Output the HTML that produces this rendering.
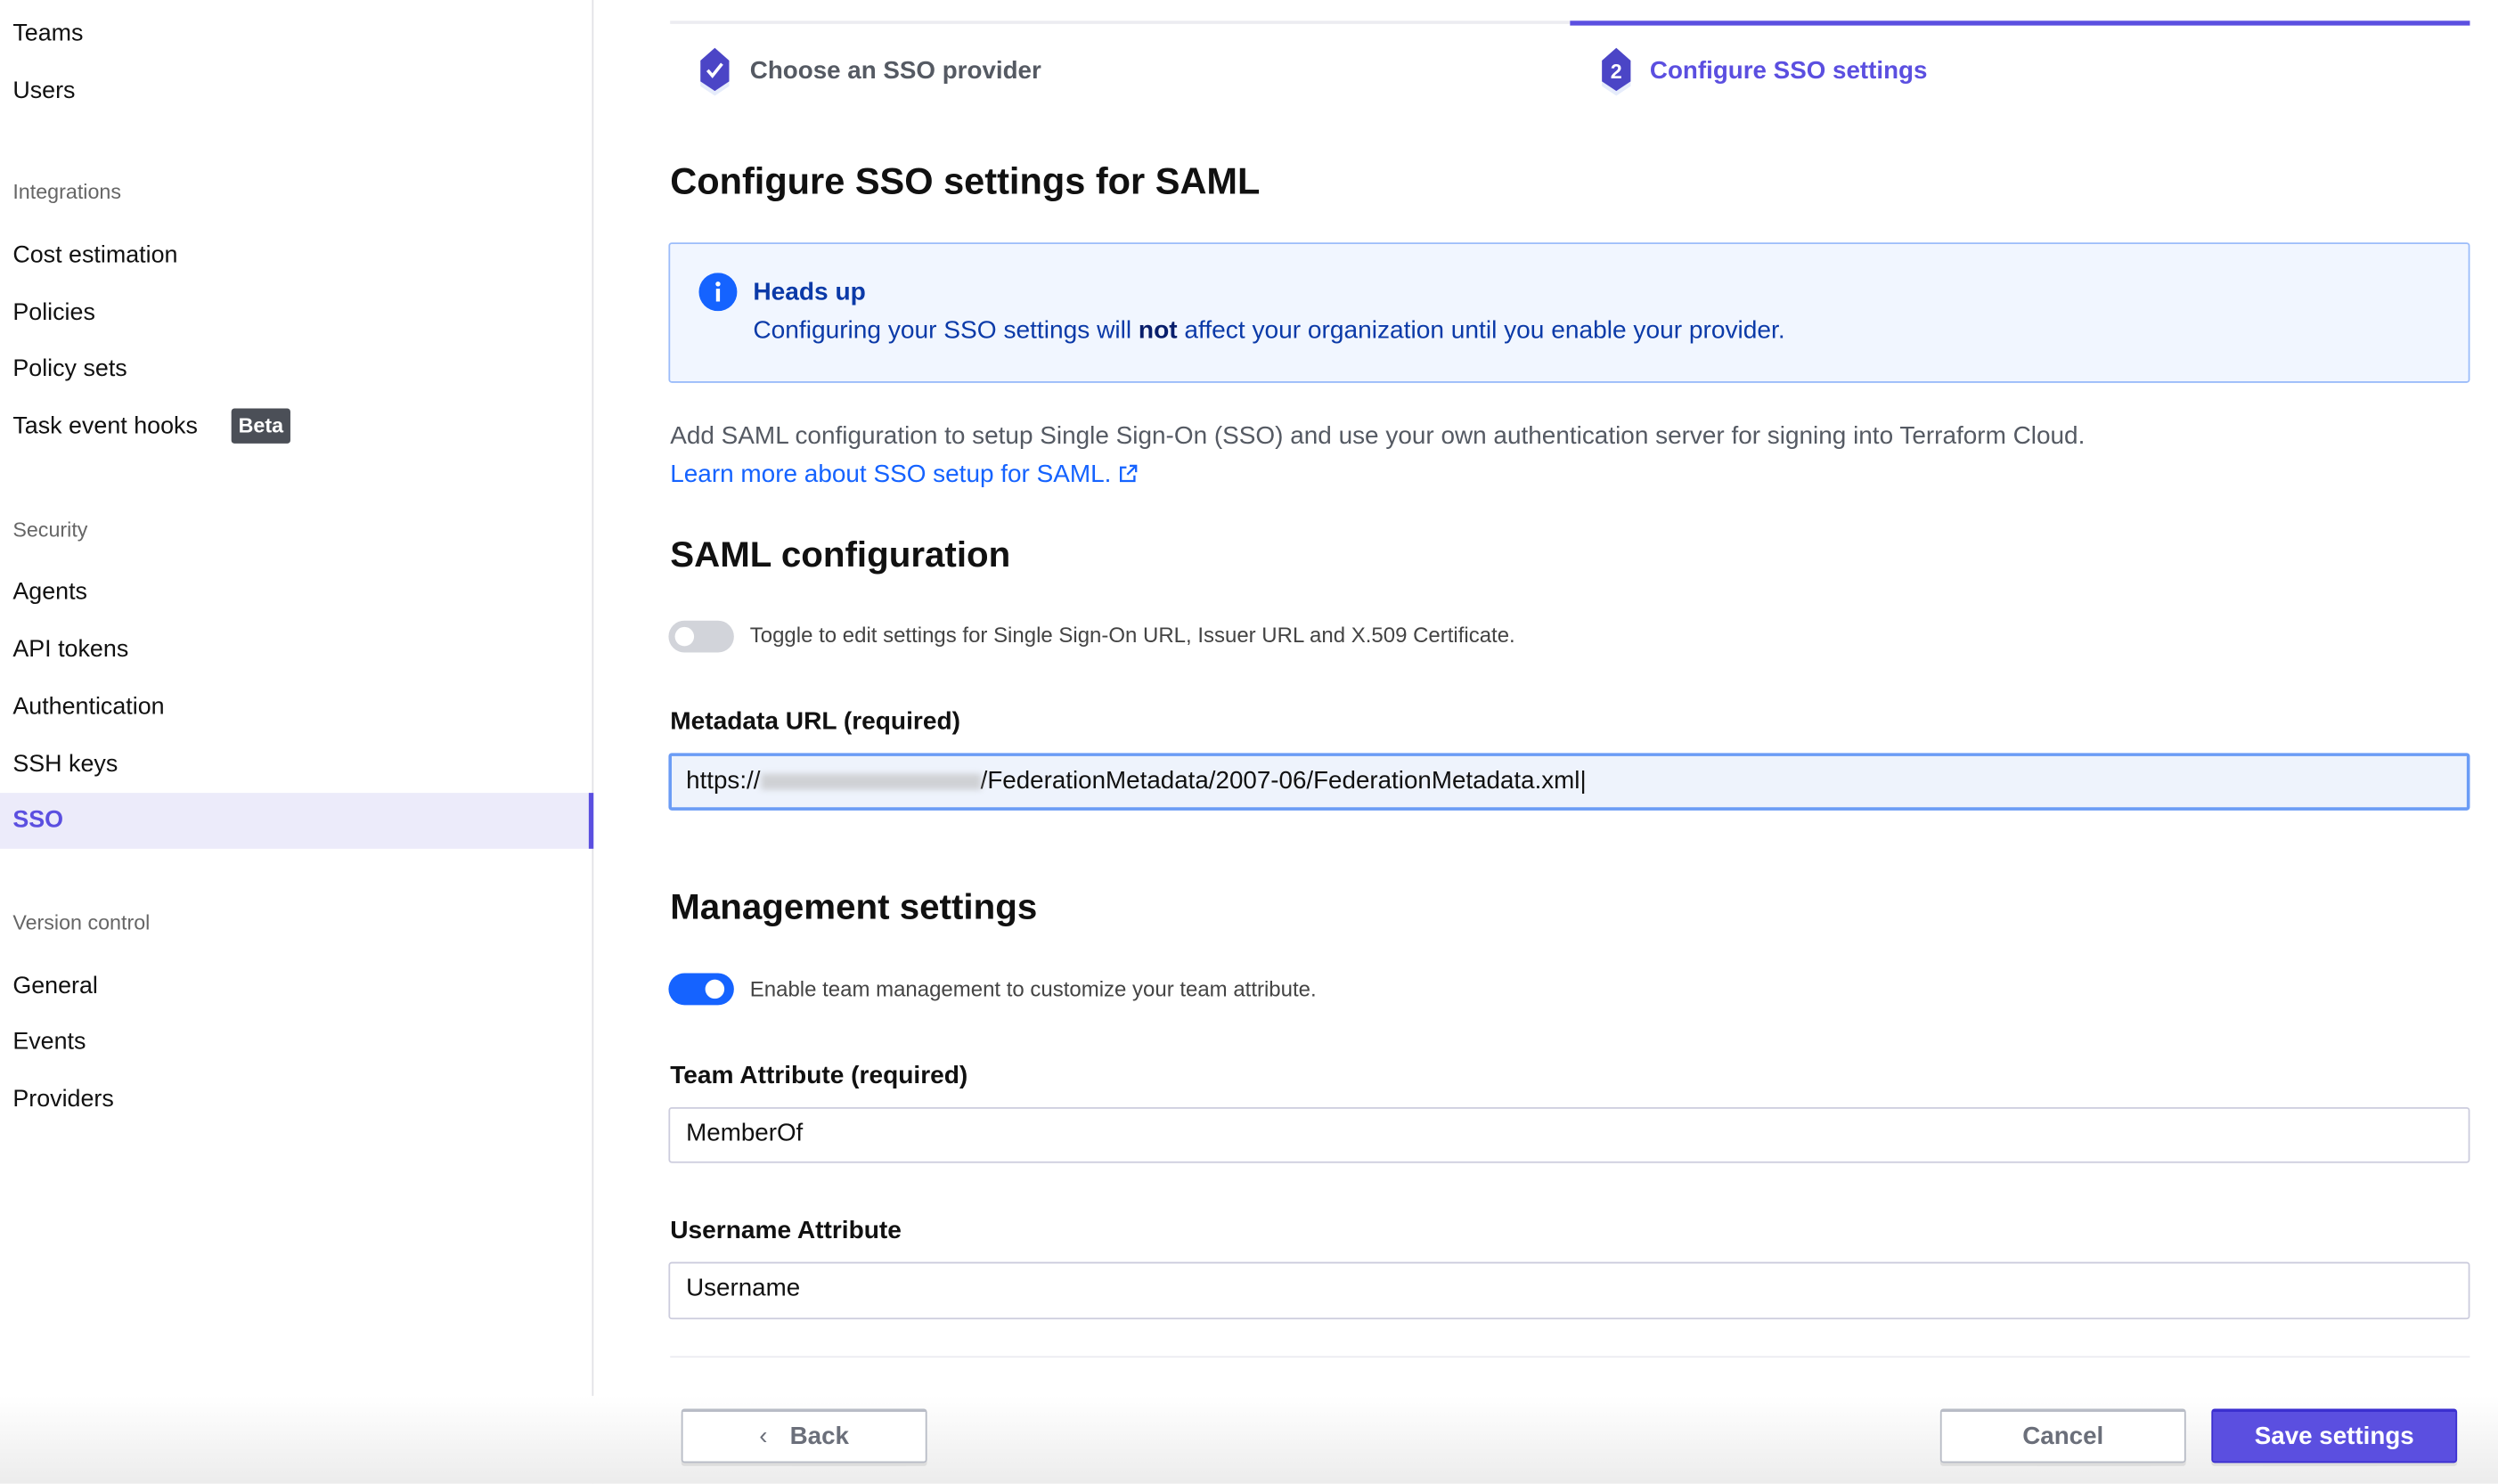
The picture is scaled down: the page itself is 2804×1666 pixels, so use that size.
<!DOCTYPE html>
<html><head><meta charset="utf-8"><style>
html,body{margin:0;padding:0;width:2804px;height:1664px;overflow:hidden;background:#fff}
#w{position:absolute;left:0;top:0;width:1566px;height:930px;transform:scale(1.791);transform-origin:0 0;font-family:"Liberation Sans",Arial,sans-serif;color:#111}
.a{position:absolute;white-space:nowrap}
.si{font-size:15px;left:8px;color:#111;transform:translateY(-50%)}
.sh{font-size:13px;left:8px;color:#666;transform:translateY(-50%)}
.c{transform:translateY(-50%)}
.inp{position:absolute;left:419px;width:1129px;height:33px;border:1px solid #ccd;border-radius:2px;box-sizing:border-box;font-size:15.5px;line-height:31px;padding-left:10px}
.btn{position:absolute;top:883px;height:34px;box-sizing:border-box;border:1px solid #b8bcc6;border-top:2px solid #b8bcc6;border-radius:2px;font-size:15.5px;font-weight:bold;color:#6b6f7a;text-align:center;line-height:31px;background:#fff;box-shadow:0 2px 0 #ddd}
.lb{font-size:15.7px;font-weight:bold}
</style></head><body><div id="w">
<div class="a" style="left:0;top:0;width:372px;height:930px;border-right:1px solid #e2e2e6;box-sizing:border-box"></div>
<div class="a si" style="top:21px">Teams</div>
<div class="a si" style="top:57px">Users</div>
<div class="a sh" style="top:120px">Integrations</div>
<div class="a si" style="top:160px">Cost estimation</div>
<div class="a si" style="top:196px">Policies</div>
<div class="a si" style="top:231px">Policy sets</div>
<div class="a si" style="top:267px">Task event hooks</div>
<div class="a" style="left:145px;top:256px;width:37px;height:22px;background:#4b4f57;color:#fff;font-size:13px;font-weight:bold;line-height:22px;text-align:center;border-radius:2px">Beta</div>
<div class="a sh" style="top:332px">Security</div>
<div class="a si" style="top:371px">Agents</div>
<div class="a si" style="top:407px">API tokens</div>
<div class="a si" style="top:443px">Authentication</div>
<div class="a si" style="top:479px">SSH keys</div>
<div class="a" style="left:0;top:497px;width:372px;height:35px;background:#ecebfa;border-right:3px solid #5b4fe0;box-sizing:border-box"></div>
<div class="a si" style="top:514px;color:#5b4fe0;font-weight:bold">SSO</div>
<div class="a sh" style="top:578px">Version control</div>
<div class="a si" style="top:618px">General</div>
<div class="a si" style="top:653px">Events</div>
<div class="a si" style="top:689px">Providers</div>

<div class="a" style="left:420px;top:13px;width:564px;height:2px;background:#ececf1"></div>
<div class="a" style="left:984px;top:13px;width:564px;height:3px;background:#5b4fe0"></div>
<svg class="a" style="left:434px;top:29px" width="28" height="32" viewBox="0 0 28 32"><path d="M14 5 L23 14 L23 25 L14 31 L5 25 L5 14Z" fill="#e6ecfb"/><path d="M14 1 L23 9 L23 22 L14 28 L5 22 L5 9Z" fill="#4b45c6"/><path d="M9.5 15 L12.5 18.5 L18.5 11" stroke="#fff" stroke-width="2" fill="none"/></svg>
<div class="a c" style="left:470px;top:45px;font-size:15.5px;font-weight:bold;color:#555a63">Choose an SSO provider</div>
<svg class="a" style="left:999px;top:29px" width="28" height="32" viewBox="0 0 28 32"><path d="M14 5 L23 14 L23 25 L14 31 L5 25 L5 14Z" fill="#e6ecfb"/><path d="M14 1 L23 9 L23 22 L14 28 L5 22 L5 9Z" fill="#4b45c6"/><text x="14" y="20" font-size="13" font-weight="bold" fill="#fff" text-anchor="middle" font-family="Liberation Sans">2</text></svg>
<div class="a c" style="left:1034px;top:45px;font-size:15.5px;font-weight:bold;color:#5b4fe0">Configure SSO settings</div>

<div class="a c" style="left:420px;top:114px;font-size:23.2px;font-weight:bold">Configure SSO settings for SAML</div>
<div class="a" style="left:419px;top:152px;width:1129px;height:88px;background:#f1f6ff;border:1px solid #9bbcfa;box-sizing:border-box;border-radius:2px"></div>
<svg class="a" style="left:438px;top:171px" width="24" height="24"><circle cx="12" cy="12" r="12" fill="#1563ff"/><rect x="10.8" y="10" width="2.4" height="8" fill="#fff"/><circle cx="12" cy="7" r="1.5" fill="#fff"/></svg>
<div class="a c" style="left:472px;top:184px;font-size:15.7px;font-weight:bold;color:#0b3aa8">Heads up</div>
<div class="a c" style="left:472px;top:208px;font-size:15.7px;color:#0b3aa8">Configuring your SSO settings will <b style="color:#081e6b">not</b> affect your organization until you enable your provider.</div>
<div class="a c" style="left:420px;top:274px;font-size:15.6px;color:#555a63">Add SAML configuration to setup Single Sign-On (SSO) and use your own authentication server for signing into Terraform Cloud.</div>
<div class="a c" style="left:420px;top:298px;font-size:15.6px;color:#1563ff">Learn more about SSO setup for SAML. <svg width="12" height="12" viewBox="0 0 12 12" style="vertical-align:-1px"><path d="M5 2H1.5v8.5H10V7M7 1h4v4M11 1L5.5 6.5" stroke="#1563ff" stroke-width="1.3" fill="none"/></svg></div>
<div class="a c" style="left:420px;top:348px;font-size:22.5px;font-weight:bold">SAML configuration</div>
<div class="a" style="left:419px;top:389px;width:41px;height:20px;border-radius:10px;background:#d2d4da"></div>
<div class="a" style="left:423px;top:393px;width:12px;height:12px;border-radius:6px;background:#fff"></div>
<div class="a c" style="left:470px;top:398px;font-size:13.4px;color:#444">Toggle to edit settings for Single Sign-On URL, Issuer URL and X.509 Certificate.</div>
<div class="a c lb" style="left:420px;top:453px">Metadata URL (required)</div>
<div class="inp" style="top:472px;height:36px;background:#eef3fc;border:2px solid #6b9cf5;line-height:32px;padding-left:9px">https://<span style="display:inline-block;width:138px;height:10px;background:#bbb;opacity:.6;vertical-align:middle;filter:blur(2px)"></span>/FederationMetadata/2007-06/FederationMetadata.xml|</div>
<div class="a c" style="left:420px;top:569px;font-size:22.5px;font-weight:bold">Management settings</div>
<div class="a" style="left:419px;top:610px;width:41px;height:20px;border-radius:10px;background:#1563ff"></div>
<div class="a" style="left:442px;top:614px;width:12px;height:12px;border-radius:6px;background:#fff"></div>
<div class="a c" style="left:470px;top:620px;font-size:13.4px;color:#444">Enable team management to customize your team attribute.</div>
<div class="a c lb" style="left:420px;top:675px">Team Attribute (required)</div>
<div class="inp" style="top:694px;height:35px">MemberOf</div>
<div class="a c lb" style="left:420px;top:772px">Username Attribute</div>
<div class="inp" style="top:791px;height:36px">Username</div>
<div class="a" style="left:420px;top:850px;width:1128px;height:1px;background:#ececf1"></div>
<div class="a" style="left:0;top:875px;width:1566px;height:55px;background:linear-gradient(#fff,#ececec)"></div>
<div class="btn" style="left:427px;width:154px"><span style="font-weight:normal;margin-right:14px">&#8249;</span>Back</div>
<div class="btn" style="left:1216px;width:154px">Cancel</div>
<div class="btn" style="left:1386px;width:154px;background:#5b4fe0;border-color:#3b2fd0;color:#fff">Save settings</div>
</div></body></html>
